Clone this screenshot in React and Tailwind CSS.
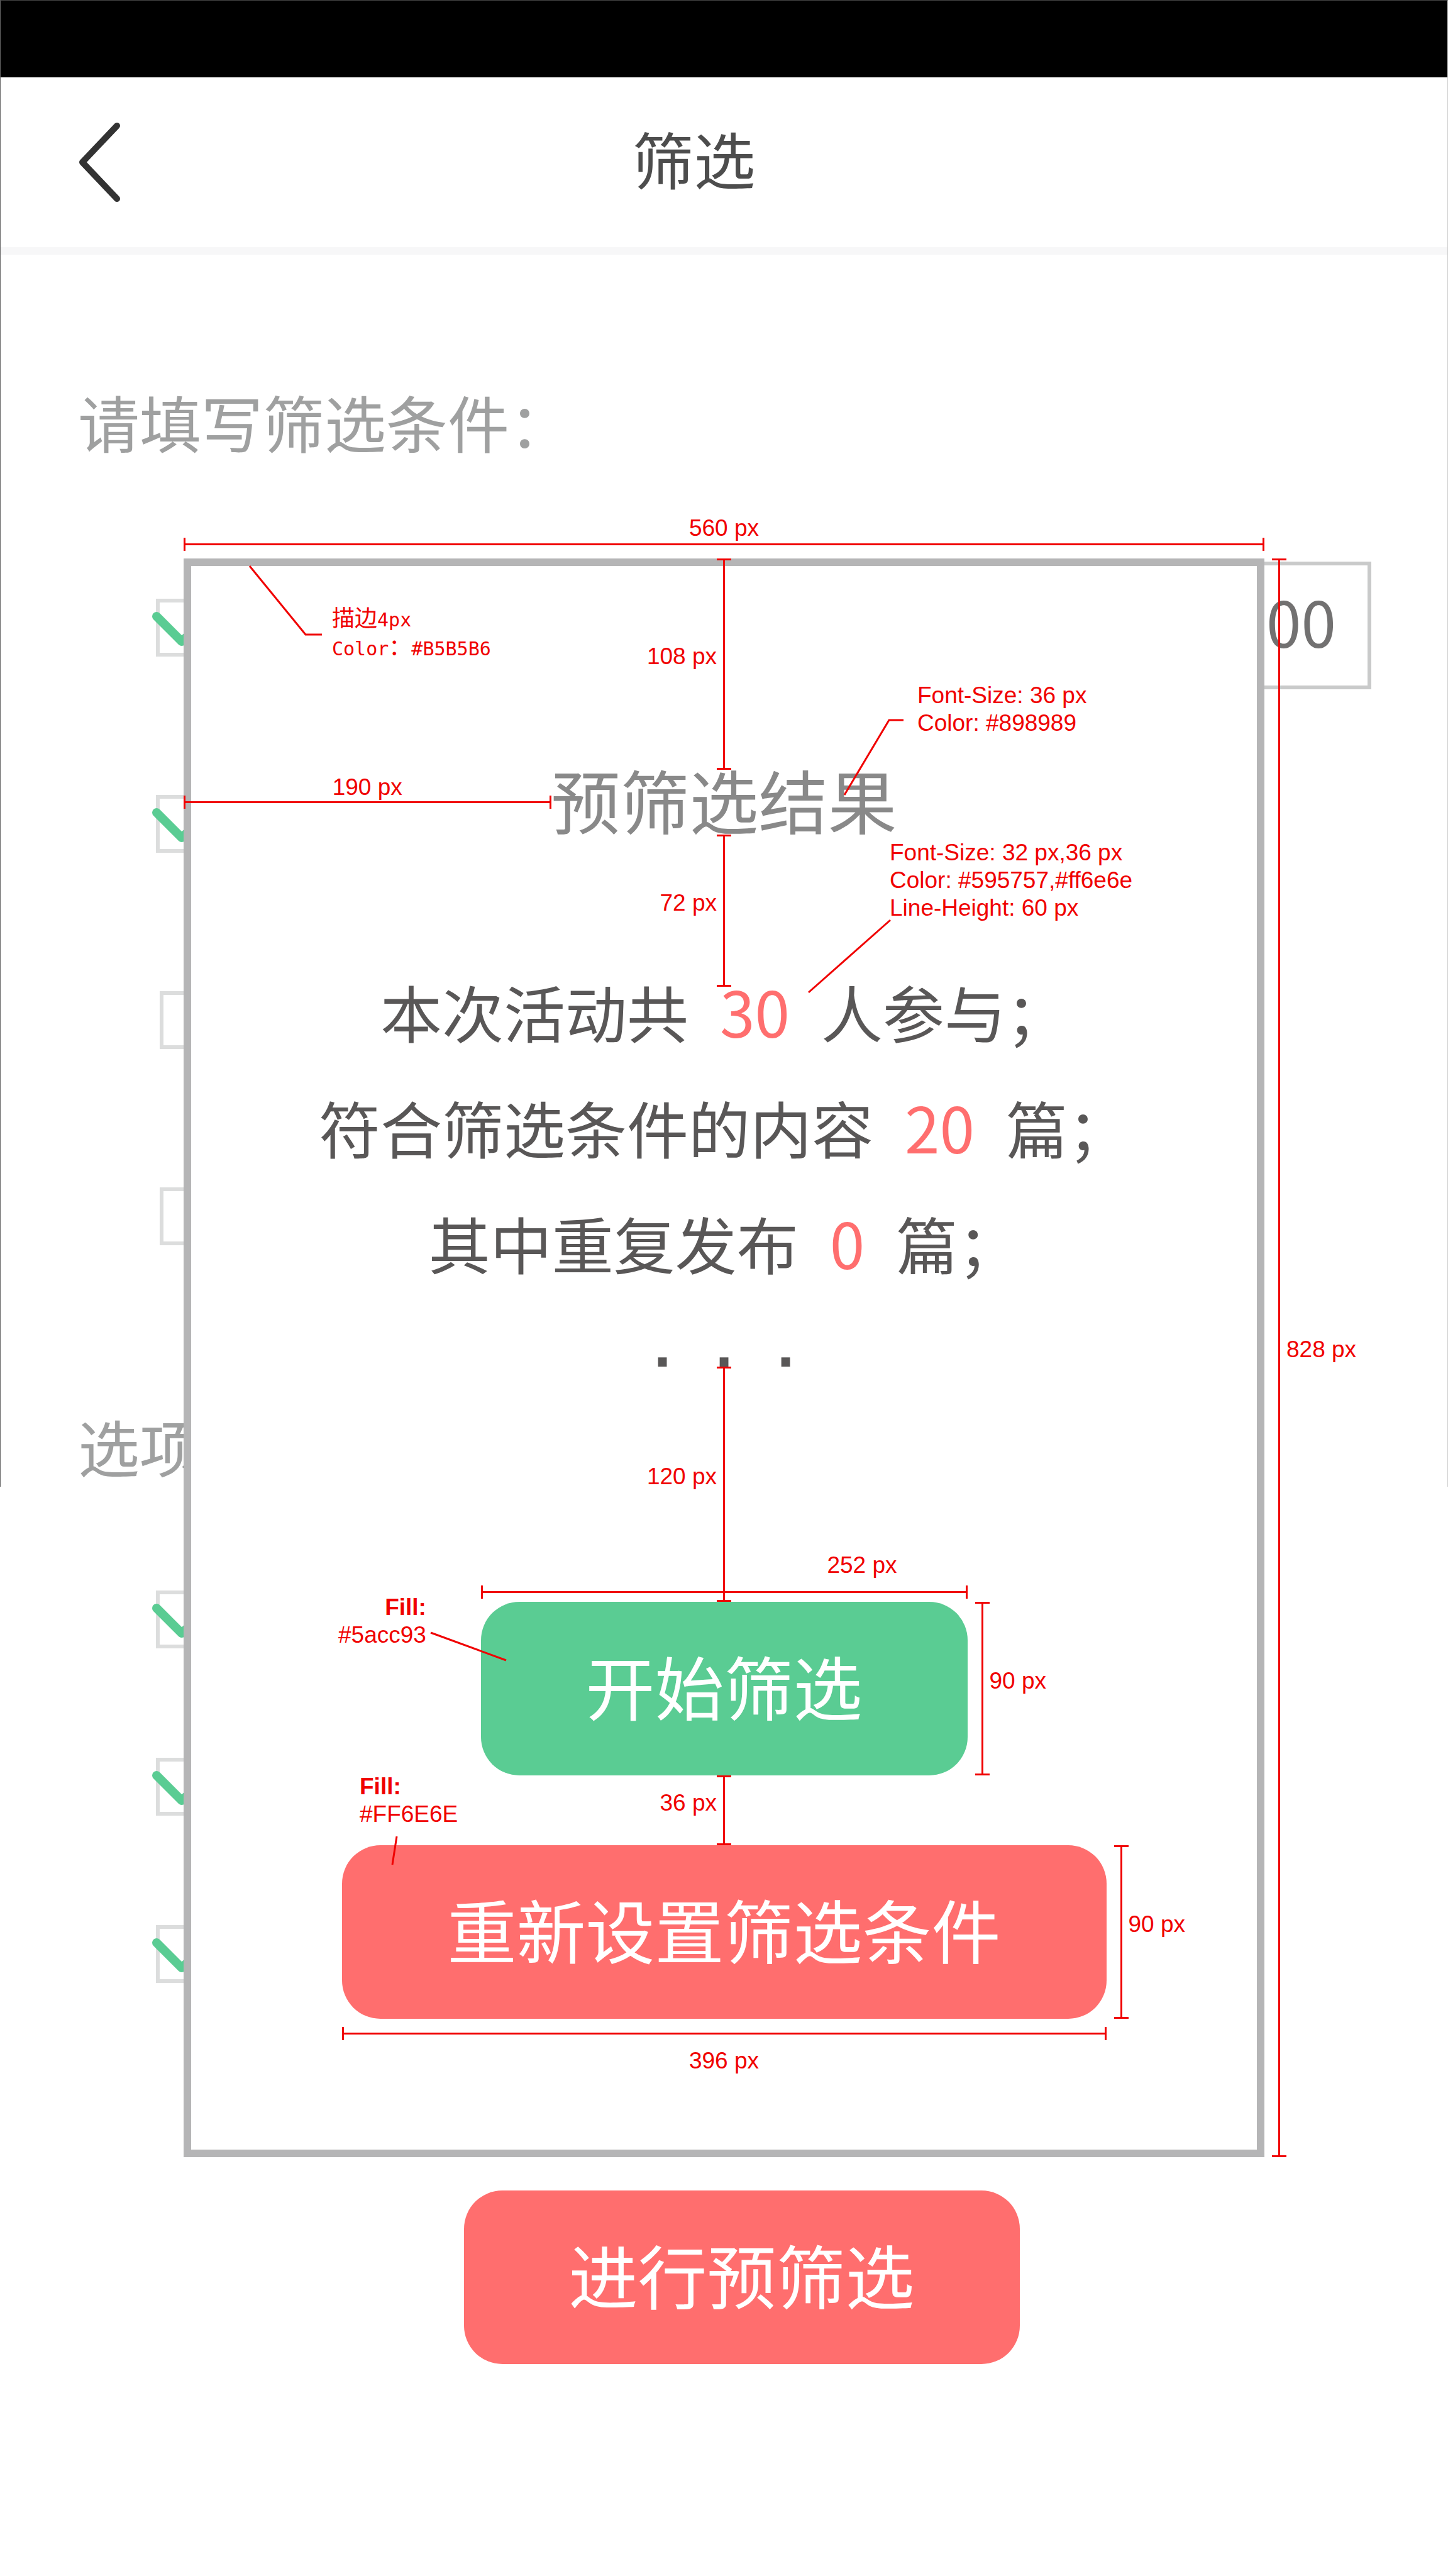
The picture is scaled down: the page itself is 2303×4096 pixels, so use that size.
import React from "react";

const noteText = "font-['Liberation_Sans',sans-serif] text-[37px] leading-[44px] text-[#f00000] whitespace-nowrap";

function HRuler({ className = "" }) {
  return (
    <div aria-hidden="true" className={`flex h-[21px] items-center border-x-[3px] border-[#f00000] ${className}`}>
      <div className="h-[3px] w-full bg-[#f00000]" />
    </div>
  );
}

function VRuler({ className = "" }) {
  return (
    <div aria-hidden="true" className={`flex w-[23px] justify-center border-y-[3px] border-[#f00000] ${className}`}>
      <div className="h-full w-[3px] bg-[#f00000]" />
    </div>
  );
}

/* Vertical gap inside the dialog, drawn as a measured distance. */
function Gap({ className = "", label }) {
  return (
    <div className={`grid grid-cols-[1fr_23px_1fr] ${className}`}>
      <span className={`self-center pb-6 text-right ${noteText}`}>{label}</span>
      <VRuler />
    </div>
  );
}

function Check({ checked, label }) {
  return (
    <span className={checked ? "relative block size-[92px]" : "relative ml-[6px] block size-[92px]"}>
      <input
        type="checkbox"
        defaultChecked={checked}
        aria-label={label}
        className="peer block size-full appearance-none border-[6px] border-[#dcdddd] bg-white"
      />
      <svg
        aria-hidden="true"
        viewBox="0 0 92 92"
        className="pointer-events-none absolute inset-0 hidden size-full overflow-visible peer-checked:block"
      >
        <path d="M1 28 L41 68 L108 4" fill="none" stroke="#5acc93" strokeWidth="14" strokeLinecap="round" strokeLinejoin="round" />
      </svg>
    </span>
  );
}

function Count({ children }) {
  return <em className="mx-[50px] text-[100px] leading-none not-italic text-[#ff6e6e]">{children}</em>;
}

function Note({ className = "", children }) {
  return <div className={`absolute ${noteText} ${className}`}>{children}</div>;
}

function SideRuler() {
  return (
    <div className="absolute inset-y-0 left-full ml-[12px] flex items-center">
      <VRuler className="h-full" />
      <span className={`absolute left-full -mt-[24px] ${noteText}`}>90 px</span>
    </div>
  );
}

function ResultDialog() {
  return (
    <section
      role="dialog"
      aria-labelledby="result-title"
      className="absolute inset-x-[292px] top-[888px] border-[12px] border-[#b5b5b6] bg-white pb-[208px]"
    >
      <HRuler className="absolute -inset-x-3 -top-[45px]" />
      <span className={`absolute -inset-x-3 -top-[82px] text-center ${noteText}`}>560 px</span>
      <div className="absolute -bottom-3 -top-3 left-full ml-6 flex items-center">
        <VRuler className="h-full" />
        <span className={`absolute left-full -mt-[26px] ${noteText}`}>828 px</span>
      </div>

      <Gap className="-mt-3 h-[336px]" label="108 px" />
      <div className="flex h-[103px] items-center">
        <div className="relative -ml-3 flex-1">
          <span className={`absolute inset-x-0 bottom-[12px] text-center ${noteText}`}>190 px</span>
          <HRuler />
        </div>
        <h2 id="result-title" className="pb-3 text-[110px] leading-[90px] text-[#898989]">预筛选结果</h2>
        <div className="-mr-3 flex-1" />
      </div>
      <Gap className="h-[242px]" label="72 px" />

      <div className="-mt-[54px] text-center text-[98px] leading-[184px] text-[#595757]">
        <p>本次活动共<Count>30</Count>人参与；</p>
        <p>符合筛选条件的内容<Count>20</Count>篇；</p>
        <p>其中重复发布<Count>0</Count>篇；</p>
        <p className="flex h-[106px] justify-center font-['Liberation_Sans',sans-serif] font-bold leading-[144px]">
          <span className="w-[98px]">.</span>
          <span className="w-[98px]">.</span>
          <span className="w-[98px]">.</span>
        </p>
      </div>

      <Gap className="h-[374px]" label="120 px" />
      <div className="relative mx-auto w-[774px]">
        <span className={`absolute bottom-full right-[112px] mb-[36px] ${noteText}`}>252 px</span>
        <HRuler className="absolute inset-x-0 bottom-full mb-[5px]" />
        <button type="button" className="block h-[276px] w-full rounded-[61px] bg-[#5acc93] pb-3 text-[110px] leading-none text-white">
          开始筛选
        </button>
        <SideRuler />
      </div>
      <Gap className="h-[111px]" label="36 px" />
      <div className="relative mx-auto w-[1216px]">
        <button type="button" className="block h-[276px] w-full rounded-[61px] bg-[#ff6e6e] pb-3 text-[110px] leading-none text-white">
          重新设置筛选条件
        </button>
        <SideRuler />
        <HRuler className="absolute inset-x-0 top-full mt-[13px]" />
        <span className={`absolute inset-x-0 top-full mt-[45px] text-center ${noteText}`}>396 px</span>
      </div>

      <svg aria-hidden="true" width="1696" height="2518" className="pointer-events-none absolute left-0 top-0 overflow-visible" fill="none" stroke="#f00000" strokeWidth="3">
        <path d="M93 0 L182 109 H208" />
        <path d="M1039 364 L1110 245 H1133" />
        <path d="M1112 563 L982 678" />
        <path d="M381 1696 L501 1740" />
        <path d="M327 2020 L320 2065" />
      </svg>
      <div className="absolute left-[224px] top-[64px] whitespace-nowrap font-['DejaVu_Sans_Mono','Noto_Sans_CJK_SC',monospace] text-[30px] leading-[44px] text-[#f00000]">
        <span className="text-[36px] leading-none">描边</span>4px
        <br />
        Color<span className="font-['Noto_Sans_CJK_SC',sans-serif] text-[36px] leading-none">：</span>#B5B5B6
      </div>
      <Note className="left-[1155px] top-[184px]">Font-Size: 36 px<br />Color: #898989</Note>
      <Note className="left-[1111px] top-[434px]">Font-Size: 32 px,36 px<br />Color: #595757,#ff6e6e<br />Line-Height: 60 px</Note>
      <Note className="left-[234px] top-[1634px] text-right"><b>Fill:</b><br />#5acc93</Note>
      <Note className="left-[268px] top-[1919px]"><b>Fill:</b><br />#FF6E6E</Note>
    </section>
  );
}

const label = "text-[98px] leading-[98px] text-[#9fa0a0]";

export default function App() {
  return (
    <div lang="zh-CN" className="relative min-h-screen bg-white font-['Noto_Sans_CJK_SC',sans-serif]">
      <div className="h-[123px] bg-black" />
      <header className="flex h-[282px] items-center border-b-[12px] border-[#f7f7f8]">
        <button type="button" aria-label="返回" className="ml-[119px] w-[72px]">
          <svg viewBox="0 0 72 136" className="block w-full" fill="none" stroke="#333" strokeWidth="10" strokeLinecap="round" strokeLinejoin="round">
            <path d="M67 10 L12 68 L67 126" />
          </svg>
        </button>
        <h1 className="flex-1 pb-4 pr-[287px] text-center text-[98px] leading-[98px] text-[#4d4d4d]">筛选</h1>
      </header>

      <main>
        <h2 className={`pl-[124px] pt-[215px] ${label}`}>请填写筛选条件：</h2>
        <div className="mt-[234px] flex flex-col gap-[220px] pl-[248px] pr-[122px]">
          <div className="flex h-[92px] items-center justify-between">
            <Check checked label="条件一" />
            <input
              type="text"
              defaultValue="00"
              aria-label="数值"
              className="mb-2 h-[203px] w-[400px] shrink-0 border-[6px] border-[#c9caca] bg-white pb-4 pr-[50px] text-right text-[100px] text-[#727171]"
            />
          </div>
          <Check checked label="条件二" />
          <Check label="条件三" />
          <Check label="条件四" />
        </div>
        <h2 className={`mt-[269px] pl-[124px] ${label}`}>选项</h2>
        <div className="mt-[182px] flex flex-col gap-[174px] pl-[248px]">
          <Check checked label="选项一" />
          <Check checked label="选项二" />
          <Check checked label="选项三" />
        </div>
        <div className="mt-[330px] flex justify-center pl-14">
          <button type="button" className="h-[276px] w-[884px] rounded-[61px] bg-[#ff6e6e] pb-3 text-[110px] leading-none text-white">
            进行预筛选
          </button>
        </div>
      </main>

      <div aria-hidden="true" className="pointer-events-none absolute inset-x-0 top-0 h-[2364px] border-x border-t border-l-[#666] border-r-[#ccc] border-t-[#444]" />
      <ResultDialog />
    </div>
  );
}
